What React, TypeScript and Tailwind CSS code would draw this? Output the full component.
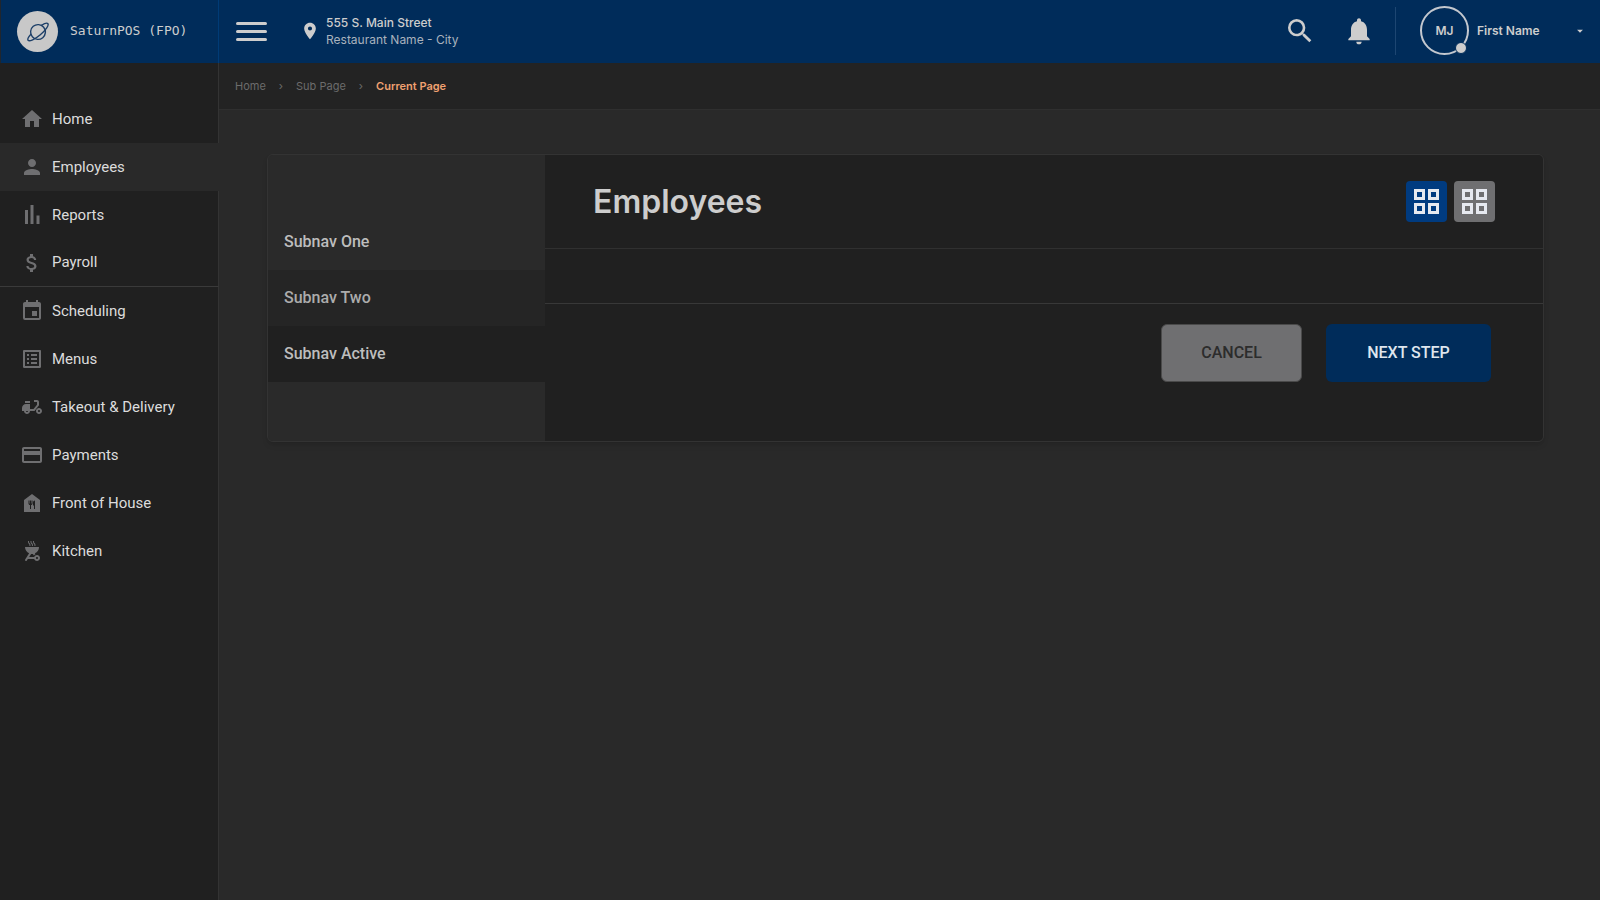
import type { ReactNode } from "react";
import type { IconType } from "react-icons";
import {
  MdArrowDropDown,
  MdAttachMoney,
  MdDeliveryDining,
  MdEvent,
  MdFoodBank,
  MdHome,
  MdListAlt,
  MdLocationOn,
  MdNotifications,
  MdOutdoorGrill,
  MdPayment,
  MdPerson,
  MdSearch,
} from "react-icons/md";

function PlanetIcon() {
  return (
    <svg width="24" height="24" viewBox="-12 -12 24 24" fill="none" stroke="currentColor" strokeWidth="1.4" strokeLinecap="round" aria-hidden="true">
      <g transform="rotate(-40)">
        <circle r="7.4" />
        <path d="M6.9 -2.8C10 -2.4 12.9 -1.4 12.9 0C12.9 2 7 3.6 0 3.6C-7 3.6 -12.9 2 -12.9 0C-12.9 -1.4 -10 -2.4 -6.9 -2.8" />
      </g>
    </svg>
  );
}

function BarsIcon({ size = 24 }: { size?: number | string }) {
  return (
    <svg width={size} height={size} viewBox="0 0 24 24" fill="currentColor" aria-hidden="true">
      <path d="M5 7h3v14H5zM10.5 2h3v19h-3zM16.5 12.500H19.500v8.500h-3z" />
    </svg>
  );
}

function GridIcon() {
  return (
    <svg width="25" height="25" viewBox="0 0 25 25" fill="none" stroke="currentColor" strokeWidth="3" aria-hidden="true">
      <rect x="1.5" y="1.5" width="8" height="8" />
      <rect x="15.5" y="1.5" width="8" height="8" />
      <rect x="1.5" y="15.5" width="8" height="8" />
      <rect x="15.5" y="15.5" width="8" height="8" />
    </svg>
  );
}

type NavEntry = { label: string; icon: IconType | typeof BarsIcon; active?: boolean; divider?: boolean };

const navEntries: NavEntry[] = [
  { label: "Home", icon: MdHome },
  { label: "Employees", icon: MdPerson, active: true },
  { label: "Reports", icon: BarsIcon },
  { label: "Payroll", icon: MdAttachMoney, divider: true },
  { label: "Scheduling", icon: MdEvent },
  { label: "Menus", icon: MdListAlt },
  { label: "Takeout & Delivery", icon: MdDeliveryDining },
  { label: "Payments", icon: MdPayment },
  { label: "Front of House", icon: MdFoodBank },
  { label: "Kitchen", icon: MdOutdoorGrill },
];

function NavItem({ label, icon: Icon, active, divider }: NavEntry) {
  const state = active ? "border-r-[#292929] bg-[#292929]" : "border-r-[#333333]";
  const line = divider ? "border-b border-b-[#3a3a3a]" : "";
  return (
    <li>
      <a
        href="#"
        aria-current={active ? "page" : undefined}
        className={`flex h-12 items-center gap-2 border-r pl-5 text-[15px] text-[#dcdcdc] ${state} ${line}`}
      >
        <span className="text-[#6f6f71]">
          <Icon size={24} />
        </span>
        {label}
      </a>
    </li>
  );
}

function ViewButton({ label, className }: { label: string; className: string }) {
  return (
    <button type="button" aria-label={label} className={`flex size-[41px] items-center justify-center rounded-sm text-[#e6e9f0] ${className}`}>
      <GridIcon />
    </button>
  );
}

function SubnavItem({ children, className }: { children: ReactNode; className: string }) {
  return (
    <li>
      <a href="#" className={`flex h-14 items-center px-4 font-['Roboto',sans-serif] font-medium ${className}`}>
        {children}
      </a>
    </li>
  );
}

export default function App() {
  return (
    <div className="flex min-h-screen flex-col bg-[#292929] font-['Inter',sans-serif]">
      <header className="flex h-[63px] items-stretch bg-[#002c5a] text-[#cdcdcd]">
        <div className="flex w-[219px] shrink-0 items-center gap-3 border-r border-l border-r-[#003b76] border-l-[#20262e] pl-4">
          <span className="flex size-[41px] items-center justify-center rounded-full bg-[#c8c8c8] text-[#1d3f68]">
            <PlanetIcon />
          </span>
          <span className="pb-0.5 font-['DejaVu_Sans_Mono',monospace] text-[13px] whitespace-nowrap">SaturnPOS (FPO)</span>
        </div>
        <button type="button" aria-label="Toggle menu" className="ml-[17px] flex w-[31px] shrink-0 flex-col justify-center gap-[5px]">
          <span className="h-[3px] rounded-xs bg-[#cdcdcd]" />
          <span className="h-[3px] rounded-xs bg-[#cdcdcd]" />
          <span className="h-[3px] rounded-xs bg-[#cdcdcd]" />
        </button>
        <div className="ml-8 flex items-center gap-1.5 pb-0.5 pl-px">
          <MdLocationOn size={20} />
          <div className="text-xs leading-[17px] whitespace-nowrap">
            <p className="font-medium">555 S. Main Street</p>
            <p className="text-[#a9b2bd]">Restaurant Name - City</p>
          </div>
        </div>
        <div className="ml-auto flex items-center pb-0.5">
          <button type="button" aria-label="Search">
            <MdSearch size={32} />
          </button>
          <button type="button" aria-label="Notifications" className="ml-[27px]">
            <MdNotifications size={32} />
          </button>
          <span className="ml-5 h-12 w-px bg-[#1d4672]" />
          <button type="button" className="ml-6 flex items-center pr-[13px]">
            <span className="relative flex size-[49px] items-center justify-center rounded-full border-2 border-[#c3c8cf] text-xs font-semibold">
              MJ
              <span className="absolute right-0 -bottom-px size-3 rounded-full border border-[#002c5a] bg-[#cdcdcd]" />
            </span>
            <span className="ml-2 w-24 text-left text-xs font-semibold">First Name</span>
            <MdArrowDropDown size={14} />
          </button>
        </div>
      </header>

      <div className="flex flex-1">
        <nav aria-label="Main" className="flex w-[219px] shrink-0 flex-col bg-[#202020] font-['Roboto',sans-serif]">
          <div className="h-8 border-r border-r-[#333333]" />
          <ul>
            {navEntries.map((entry) => (
              <NavItem key={entry.label} {...entry} />
            ))}
          </ul>
          <div className="flex-1 border-r border-r-[#333333]" />
        </nav>

        <div className="flex min-w-0 flex-1 flex-col">
          <nav aria-label="Breadcrumb" className="border-b border-b-[#2f2f2f] bg-[#232323]">
            <ol className="flex h-[46px] items-center gap-[13px] px-4 text-[11px] text-[#6c6c6c]">
              <li>
                <a href="#">Home</a>
              </li>
              <li aria-hidden="true">›</li>
              <li>
                <a href="#">Sub Page</a>
              </li>
              <li aria-hidden="true">›</li>
              <li aria-current="page" className="font-semibold text-[#f0a171]">
                Current Page
              </li>
            </ol>
          </nav>

          <main className="pt-11 pr-14 pl-12">
            <div className="flex overflow-hidden rounded-md border border-[#333333] shadow-md">
              <nav aria-label="Employees" className="w-[277px] shrink-0 bg-[#2a2a2a] py-[59px]">
                <ul>
                  <SubnavItem className="text-[#bdbdbd]">Subnav One</SubnavItem>
                  <SubnavItem className="bg-[#252525] text-[#acacac]">Subnav Two</SubnavItem>
                  <SubnavItem className="bg-[#202020] text-[#bdbdbd]">Subnav Active</SubnavItem>
                </ul>
              </nav>
              <section className="flex min-w-0 flex-1 flex-col bg-[#202020]">
                <div className="flex h-[94px] items-center justify-between border-b border-b-[#303030] px-12">
                  <h1 className="text-[32px] font-semibold text-[#cdcdcd]">Employees</h1>
                  <div className="flex gap-[7px]">
                    <ViewButton label="Grid view" className="bg-[#003b80]" />
                    <ViewButton label="Compact grid view" className="bg-[#6f6f71]" />
                  </div>
                </div>
                <div className="h-[55px] border-b border-b-[#383838]" />
                <div className="flex items-center justify-end gap-6 px-[52px] pt-5 font-['Roboto',sans-serif] font-medium">
                  <button type="button" className="h-[58px] w-[141px] rounded-md border border-[#4a4a4a] bg-[#6f6f71] text-[#2c2c2c]">
                    CANCEL
                  </button>
                  <button type="button" className="h-[58px] w-[165px] rounded-md bg-[#002c5a] text-[#dfe6ee]">
                    NEXT STEP
                  </button>
                </div>
              </section>
            </div>
          </main>
        </div>
      </div>
    </div>
  );
}
